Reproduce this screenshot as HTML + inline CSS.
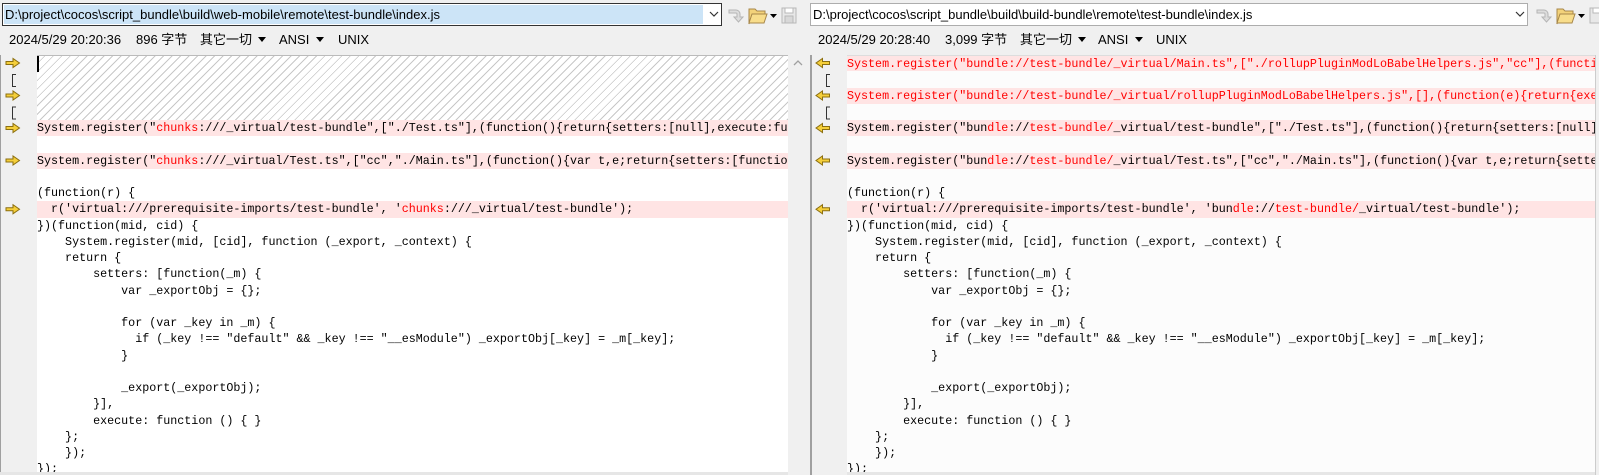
<!DOCTYPE html>
<html><head><meta charset="utf-8">
<style>
*{margin:0;padding:0;box-sizing:border-box}
body{width:1599px;height:475px;overflow:hidden;background:#f0f0f0;font-family:"Liberation Sans","Noto Sans CJK SC",sans-serif;position:relative}
.abs{position:absolute}
.addr{position:absolute;top:3px;height:23px;background:#fff;border:1px solid #adadad;font-size:13px;line-height:21px;white-space:nowrap;overflow:hidden}
.addr .t{position:absolute;left:1px;top:1px;height:19px;line-height:19px;padding-left:1px}
.chev{position:absolute;top:5px;width:10px;height:10px}
.status{position:absolute;top:31px;font-size:13px;line-height:18px;color:#000;white-space:nowrap}
.code{position:absolute;top:55px;height:420px;background:#fff;overflow:hidden}
.gut{position:absolute;top:55px;height:420px;background:#f0f0f0;border-left:1px solid #a0a0a0}
.ln{position:absolute;left:0;height:16.25px;line-height:16.25px;font-family:"Liberation Mono",monospace;font-size:11.7px;white-space:pre;color:#000}
.pk{background:#ffe4e4}
.r{color:#f00}
.hatch{background:repeating-linear-gradient(135deg,#fff 0 5px,#c8c8c8 5px 6px)}
</style></head><body>
<!-- top bar -->
<div class="addr" style="left:2px;width:720px;border-color:#333">
 <div class="t" style="width:699px;background:#cce4f7">D:\project\cocos\script_bundle\build\web-mobile\remote\test-bundle\index.js</div>
 <svg class="chev" style="left:706px" viewBox="0 0 10 10"><path d="M1 3l4 4 4-4" fill="none" stroke="#333" stroke-width="1.2"/></svg>
</div>
<div class="addr" style="left:810px;width:718px">
 <div class="t">D:\project\cocos\script_bundle\build\build-bundle\remote\test-bundle\index.js</div>
 <svg class="chev" style="left:704px" viewBox="0 0 10 10"><path d="M1 3l4 4 4-4" fill="none" stroke="#333" stroke-width="1.2"/></svg>
</div>
<!-- toolbar icons -->
<svg class="abs" style="left:726px;top:4px" width="86" height="22" viewBox="0 0 86 22">
 <path d="M3 6h7a4 4 0 0 1 4 4v3h3l-4.5 5-4.5-5h3v-3a1 1 0 0 0-1-1H3z" fill="#ddd" stroke="#b5b5b5"/>
 <path d="M23 5h6l2 2h8v3H27l-4 10z" fill="#f3d27a" stroke="#a7874a"/>
 <path d="M23 19l3-9h15l-3 9z" fill="#f8dd8b" stroke="#a7874a"/>
 <path d="M44 10h7l-3.5 4z" fill="#000"/>
 <rect x="56" y="4" width="14" height="15" fill="#e8e8e8" stroke="#b8b8b8"/><rect x="59" y="4" width="8" height="5" fill="#fff" stroke="#b8b8b8"/><rect x="59" y="12" width="8" height="7" fill="#d8d8d8" stroke="#b8b8b8"/>
</svg>
<svg class="abs" style="left:1534px;top:4px" width="66" height="22" viewBox="0 0 66 22">
 <path d="M3 6h7a4 4 0 0 1 4 4v3h3l-4.5 5-4.5-5h3v-3a1 1 0 0 0-1-1H3z" fill="#ddd" stroke="#b5b5b5"/>
 <path d="M23 5h6l2 2h8v3H27l-4 10z" fill="#f3d27a" stroke="#a7874a"/>
 <path d="M23 19l3-9h15l-3 9z" fill="#f8dd8b" stroke="#a7874a"/>
 <path d="M44 10h7l-3.5 4z" fill="#000"/>
 <rect x="56" y="4" width="14" height="15" fill="#e8e8e8" stroke="#b8b8b8"/><rect x="59" y="4" width="8" height="5" fill="#fff" stroke="#b8b8b8"/>
</svg>
<!-- status -->
<div class="status" style="left:9px">2024/5/29 20:20:36</div>
<div class="status" style="left:136px">896 字节</div>
<div class="status" style="left:200px">其它一切</div>
<svg class="abs" style="left:258px;top:37px" width="9" height="6"><path d="M0 0h8l-4 5z" fill="#000"/></svg>
<div class="status" style="left:279px">ANSI</div>
<svg class="abs" style="left:316px;top:37px" width="9" height="6"><path d="M0 0h8l-4 5z" fill="#000"/></svg>
<div class="status" style="left:338px">UNIX</div>
<div class="status" style="left:818px">2024/5/29 20:28:40</div>
<div class="status" style="left:945px">3,099 字节</div>
<div class="status" style="left:1020px">其它一切</div>
<svg class="abs" style="left:1078px;top:37px" width="9" height="6"><path d="M0 0h8l-4 5z" fill="#000"/></svg>
<div class="status" style="left:1098px">ANSI</div>
<svg class="abs" style="left:1135px;top:37px" width="9" height="6"><path d="M0 0h8l-4 5z" fill="#000"/></svg>
<div class="status" style="left:1156px">UNIX</div>

<!-- left pane -->
<div class="gut" style="left:0;width:37px"></div>
<div class="code" style="left:37px;width:751px;height:417px">
 <div class="ln hatch" style="top:0;width:751px;height:65px;border-top:1px solid #bbb"></div>
 <div class="abs" style="left:0;top:1px;width:2px;height:16px;background:#000"></div>
 <div class="ln pk" style="top:65px;width:751px">System.register("<span class="r">chunks</span>:///_virtual/test-bundle",["./Test.ts"],(function(){return{setters:[null],execute:function(){</div>
 <div class="ln pk" style="top:97.5px;width:751px">System.register("<span class="r">chunks</span>:///_virtual/Test.ts",["cc","./Main.ts"],(function(){var t,e;return{setters:[function(</div>
 <div class="ln" style="top:130px">(function(r) {</div>
 <div class="ln pk" style="top:146.25px;width:751px">  r('virtual:///prerequisite-imports/test-bundle', '<span class="r">chunks</span>:///_virtual/test-bundle');</div>
 <div class="ln" style="top:162.5px">})(function(mid, cid) {
    System.register(mid, [cid], function (_export, _context) {
    return {
        setters: [function(_m) {
            var _exportObj = {};

            for (var _key in _m) {
              if (_key !== "default" &amp;&amp; _key !== "__esModule") _exportObj[_key] = _m[_key];
            }

            _export(_exportObj);
        }],
        execute: function () { }
    };
    });
});</div>
</div>
<div class="abs" style="left:0;top:472px;width:788px;height:3px;background:#e6e6e6"></div>
<div class="abs" style="left:788px;top:55px;width:20px;height:420px;background:#f0f0f0"></div>
<svg class="abs" style="left:792px;top:58px" width="12" height="10"><path d="M2 7l4-4 4 4" fill="none" stroke="#a0a0a0" stroke-width="1.3"/></svg>

<!-- right pane -->
<div class="gut" style="left:810px;width:37px;border-left:2px solid #a0a0a0"></div>
<div class="code" style="left:847px;width:748px;height:417px;background:#fcfcfc">
 <div class="ln pk r" style="top:0;width:748px;border-top:1px solid #ddd">System.register("bundle://test-bundle/_virtual/Main.ts",["./rollupPluginModLoBabelHelpers.js","cc"],(functi</div>
 <div class="ln pk r" style="top:32.5px;width:748px">System.register("bundle://test-bundle/_virtual/rollupPluginModLoBabelHelpers.js",[],(function(e){return{exe</div>
 <div class="ln pk" style="top:65px;width:748px">System.register("bun<span class="r">dle</span>://<span class="r">test-bundle/</span>_virtual/test-bundle",["./Test.ts"],(function(){return{setters:[null]</div>
 <div class="ln pk" style="top:97.5px;width:748px">System.register("bun<span class="r">dle</span>://<span class="r">test-bundle/</span>_virtual/Test.ts",["cc","./Main.ts"],(function(){var t,e;return{sette</div>
 <div class="ln" style="top:130px">(function(r) {</div>
 <div class="ln pk" style="top:146.25px;width:748px">  r('virtual:///prerequisite-imports/test-bundle', 'bun<span class="r">dle</span>://<span class="r">test-bundle/</span>_virtual/test-bundle');</div>
 <div class="ln" style="top:162.5px">})(function(mid, cid) {
    System.register(mid, [cid], function (_export, _context) {
    return {
        setters: [function(_m) {
            var _exportObj = {};

            for (var _key in _m) {
              if (_key !== "default" &amp;&amp; _key !== "__esModule") _exportObj[_key] = _m[_key];
            }

            _export(_exportObj);
        }],
        execute: function () { }
    };
    });
});</div>
</div>
<div class="abs" style="left:847px;top:472px;width:748px;height:3px;background:#e6e6e6"></div>
<div class="abs" style="left:1595px;top:55px;width:4px;height:420px;background:#f0f0f0;border-left:1px solid #ccc"></div>

<!-- gutter markers -->
<svg class="abs" style="left:0;top:55px" width="40" height="160">
 <defs>
  <path id="ar" d="M0 2.5h7v-3l6.5 4.5-6.5 4.5v-3h-7z" fill="#f5cf3a" stroke="#8c6f10" stroke-width="1"/>
 </defs>
 <use href="#ar" x="6" y="4"/>
 <use href="#ar" x="6" y="36.5"/>
 <use href="#ar" x="6" y="69"/>
 <use href="#ar" x="6" y="101.5"/>
 <use href="#ar" x="6" y="150.25"/>
 <path d="M16 19.5h-3.5v12h3.5" fill="none" stroke="#333"/>
 <path d="M16 52h-3.5v12h3.5" fill="none" stroke="#333"/>
</svg>
<svg class="abs" style="left:812px;top:55px" width="40" height="160">
 <defs>
  <path id="al" d="M13.5 2.5h-7v-3l-6.5 4.5 6.5 4.5v-3h7z" fill="#f5cf3a" stroke="#8c6f10" stroke-width="1"/>
 </defs>
 <use href="#al" x="4" y="4"/>
 <use href="#al" x="4" y="36.5"/>
 <use href="#al" x="4" y="69"/>
 <use href="#al" x="4" y="101.5"/>
 <use href="#al" x="4" y="150.25"/>
 <path d="M18 19.5h-3.5v12h3.5" fill="none" stroke="#333"/>
 <path d="M18 52h-3.5v12h3.5" fill="none" stroke="#333"/>
</svg>
</body></html>
